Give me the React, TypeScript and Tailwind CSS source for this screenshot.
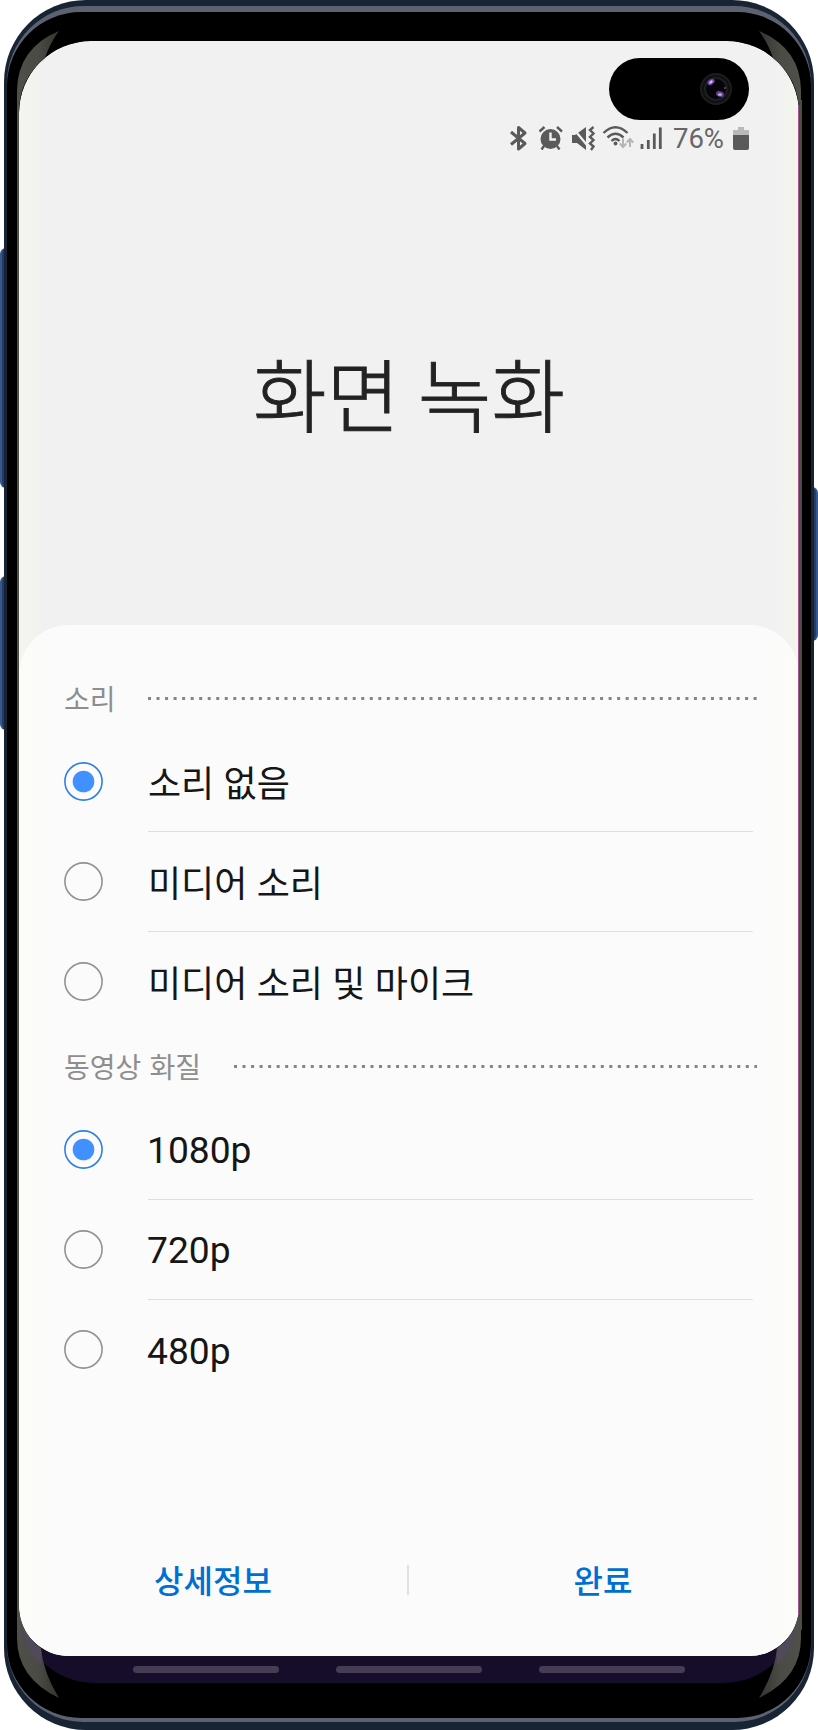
const sound = ["소리 없음", "미디어 소리", "미디어 소리 및 마이크"];
const quality = ["1080p", "720p", "480p"];

function SectionHeader({ title }: { title: string }) {
  return (
    <div className="flex h-[48px] items-center gap-[32.5px] text-[28px] text-[#8e8e8e] [word-spacing:2px]">
      <span className="leading-none whitespace-nowrap">{title}</span>
      <svg className="h-[3px] min-w-0 flex-1" aria-hidden="true">
        <line x1="0" y1="1.5" x2="100%" y2="1.5" stroke="#858585" strokeWidth="3" strokeDasharray="3 5.53" />
      </svg>
    </div>
  );
}

function Radio({ checked }: { checked: boolean }) {
  return (
    <svg width="39" height="39" viewBox="0 0 39 39" fill="none">
      <circle cx="19.5" cy="19.5" r="18.6" stroke={checked ? "#2d80ea" : "#929292"} strokeWidth="1.6" />
      {checked && <circle cx="19.5" cy="19.5" r="10.8" fill="#4091ff" />}
    </svg>
  );
}

function Options({ items, label }: { items: string[]; label: string }) {
  return (
    <div className="flex flex-col">
      {items.map((item, i) => (
        <div key={item} className="flex h-[100px] items-stretch">
          <div className="flex w-[84px] items-center pb-[1px]">
            <Radio checked={i === 0} />
          </div>
          <div
            className={`mr-[4px] flex flex-1 items-center leading-none text-[#161616] ${label} ${
              i < items.length - 1 ? "border-b border-[#dedede]" : ""
            }`}
          >
            {item}
          </div>
        </div>
      ))}
    </div>
  );
}

function StatusBar() {
  return (
    <div className="mt-[5px] flex h-[28px] items-center justify-end pr-[50px] text-[#5a5a5a]">
      <svg width="153" height="28" viewBox="0 0 153 28" fill="none" stroke="currentColor" strokeWidth="2.4">
        <path d="M2 7 L16 18.5 L9.5 24 V2.5 L16 8 L2 19.5" strokeWidth="3" strokeLinejoin="round" />
        <circle cx="41.5" cy="14" r="10" fill="currentColor" stroke="none" />
        <path d="M30.5 6.5 L35.5 2 M53 6.5 L48 2 M35 21 L32.5 24.5 M48 21 L50.5 24.5" />
        <path d="M41.5 7.5 V14.5 H47" stroke="#f1f1f1" />
        <path d="M63 10 H66 L77 2 V25 L68 18 H63 Z" fill="currentColor" stroke="none" />
        <path d="M63 2 L78 20" stroke="#f1f1f1" strokeWidth="2.2" />
        <path d="M84.5 2 L81 5 L84.5 8.5 L81 12 L84.5 15 L81 18.5 L84.5 21.5 L82 25" />
        <path d="M94.5 8 Q106.5 -3.5 118.5 8 M98.5 12.5 Q106.5 5 114.5 12.5 M102.5 16 Q106.5 12 110.5 16" />
        <circle cx="106.5" cy="18.5" r="1.9" fill="currentColor" stroke="none" />
        <path d="M114 13.5 V22 M110.8 18.5 L114 22 L117.2 18.5 M121 22 V14 M117.8 17.5 L121 14 L124.2 17.5" stroke="#b5b5b5" strokeWidth="2" />
        <path d="M133 19 V24 M139.3 15 V24 M145.3 8.5 V24 M151.3 2.5 V24" strokeWidth="2.8" />
      </svg>
      <span className="ml-[11px] font-['Roboto'] text-[27.5px] text-[#666]">76%</span>
      <svg className="ml-[9px]" width="16" height="24" viewBox="0 0 16 24">
        <path d="M0 3 H5 V0 H11 V3 H16 V8 H0 Z" fill="#b9b9b9" />
        <path d="M0 8 H16 V21 Q16 23 14 23 H2 Q0 23 0 21 Z" fill="currentColor" />
      </svg>
    </div>
  );
}

function Camera() {
  return (
    <div className="ml-auto mr-[50px] flex h-[62px] w-[140px] items-center justify-end rounded-full bg-black pr-[16px]">
      <svg width="34" height="34" viewBox="0 0 34 34">
        <circle cx="17" cy="17" r="15" fill="#101012" stroke="#1d1d20" strokeWidth="2" />
        <circle cx="17" cy="17" r="11" fill="#050507" stroke="#1e1e22" strokeWidth="2" />
        <ellipse cx="12" cy="10" rx="4" ry="2.6" fill="#69429f" transform="rotate(-35 12 10)" />
        <ellipse cx="12" cy="10" rx="2" ry="1.3" fill="#d8b8ff" transform="rotate(-35 12 10)" />
        <ellipse cx="21" cy="22" rx="4.2" ry="3" fill="#593a84" transform="rotate(20 21 22)" />
        <ellipse cx="21" cy="22.5" rx="2.2" ry="1.5" fill="#bc98e2" />
        <circle cx="26" cy="16" r="1" fill="#55585f" />
      </svg>
    </div>
  );
}

function Glare() {
  return (
    <svg className="pointer-events-none absolute inset-0" width="818" height="1730" viewBox="0 0 818 1730">
      <defs>
        <linearGradient id="glare" x1="0" y1="0" x2="1" y2="0">
          <stop offset="0" stopColor="#50504a" />
          <stop offset="0.5" stopColor="#4b4b45" />
          <stop offset="1" stopColor="#33332f" />
        </linearGradient>
        <g id="side">
          <path d="M59 31 Q50 43 45 58 Q19 79 19 112 V1610 H17 V90 Q18 48 59 31 Z" fill="url(#glare)" />
          <path d="M17 1600 H19 V1610 Q22 1635 41 1648 Q43 1672 59 1698 Q17 1678 17 1638 Z" fill="url(#glare)" />
          <path d="M20 1620 Q25 1638 41 1649 V1665 Q23 1645 20 1620 Z" fill="#504a5c" />
        </g>
      </defs>
      <use href="#side" />
      <use href="#side" transform="translate(818 0) scale(-1 1)" />
      <path d="M798.5 105 V1615" stroke="#a2568b" strokeWidth="1" />
      <path d="M800.5 100 V1630" stroke="#4d4d47" strokeWidth="3" />
    </svg>
  );
}

export default function App() {
  return (
    <div className="relative isolate h-[1730px] w-[818px] overflow-hidden bg-white px-[4px] font-['Noto_Sans_CJK_KR',sans-serif]">
      <div className="absolute top-[248px] left-0 -z-10 h-[240px] w-[12px] rounded-l-[6px] border-l-2 border-[#35598f] bg-[#243b63]" />
      <div className="absolute top-[576px] left-0 -z-10 h-[154px] w-[12px] rounded-l-[6px] border-l-2 border-[#35598f] bg-[#243b63]" />
      <div className="absolute top-[487px] right-0 -z-10 h-[154px] w-[12px] rounded-r-[6px] border-r-2 border-[#35598f] bg-[#243b63]" />
      <div className="h-full rounded-[82px] bg-[#182433] px-[3px] pt-[6px] pb-[8px]">
        <div className="h-full rounded-[77px] bg-[#5d6270] pt-[6px] pb-[4px]">
          <div className="h-full rounded-[74px] bg-black px-[12px] pt-[29px]">
            <div className="h-[1642px] overflow-hidden rounded-t-[72px] rounded-b-[76px] bg-[#150d29]">
              <div className="flex h-[1615px] flex-col overflow-hidden rounded-t-[72px] rounded-b-[50px] bg-[linear-gradient(90deg,#f4f5ee,#f1f1f1_24px,#f1f1f1_756px,#f4f5ee)] pt-[17px]">
                <Camera />
                <StatusBar />
                <h1 className="mt-[178px] text-center text-[80px] leading-[120px] font-light text-[#222] [-webkit-text-stroke:0.9px_#222]">
                  화면 녹화
                </h1>
                <div className="mt-auto flex h-[1031px] flex-col rounded-t-[50px] bg-[linear-gradient(90deg,#fcfdf7,#fbfbfb_24px,#fbfbfb_756px,#fcfdf7)] pt-[49px] pr-[42px] pl-[45px]">
                  <SectionHeader title="소리" />
                  <div className="mt-[10px]">
                    <Options items={sound} label="text-[36px] pb-[2px] [word-spacing:1.3px]" />
                  </div>
                  <div className="mt-[10px]">
                    <SectionHeader title="동영상 화질" />
                  </div>
                  <div className="mt-[10px]">
                    <Options items={quality} label="font-['Roboto'] text-[37.2px] pt-[3px] -indent-[1px]" />
                  </div>
                  <div className="mt-auto mb-[44px] -ml-[45px] -mr-[42px] flex h-[64px] items-center text-[32px] font-medium text-[#006fd2]">
                    <button className="w-[388px] pb-[3px] text-center">상세정보</button>
                    <span className="h-[30px] w-[2px] bg-[#e1e1e1]" />
                    <button className="w-[388px] pb-[3px] text-center">완료</button>
                  </div>
                </div>
              </div>
              <div className="mt-[10px] flex justify-center gap-[57px] pr-[1px]">
                <span className="h-[7px] w-[146px] rounded-full bg-[#463d55]" />
                <span className="h-[7px] w-[146px] rounded-full bg-[#463d55]" />
                <span className="h-[7px] w-[146px] rounded-full bg-[#463d55]" />
              </div>
            </div>
          </div>
        </div>
      </div>
      <Glare />
    </div>
  );
}
